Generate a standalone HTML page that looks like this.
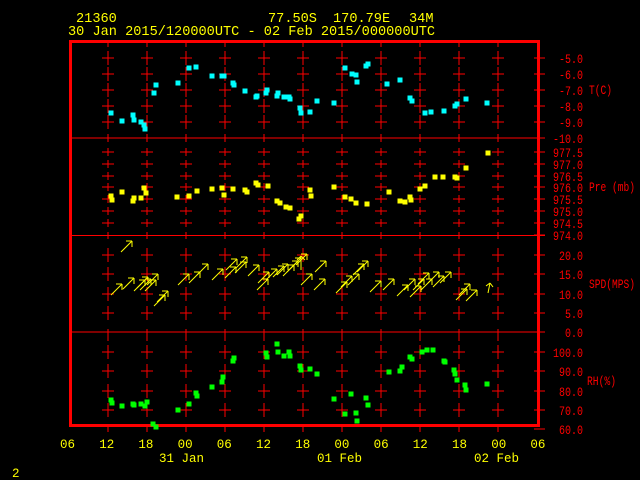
<!DOCTYPE html>
<html><head><meta charset="utf-8"><style>
html,body{margin:0;padding:0;background:#000;width:640px;height:480px;overflow:hidden}
svg{display:block}
text{font-family:"Liberation Mono","DejaVu Sans Mono",monospace;font-size:12.5px}
.h{font-size:13.6px}
.r{font-size:12.5px}
</style></head><body>
<svg id="s" width="640" height="480" xmlns="http://www.w3.org/2000/svg">
<g fill="#ffff00" class="h">
<text class="h" x="76" y="22">21360</text>
<text class="h" x="268" y="22">77.50S</text>
<text class="h" x="333" y="22">170.79E</text>
<text class="h" x="409" y="22">34M</text>
<text class="h" x="68" y="35">30 Jan 2015/120000UTC - 02 Feb 2015/000000UTC</text>
<text x="12" y="477">2</text>
<text x="159" y="462">31 Jan</text>
<text x="317" y="462">01 Feb</text>
<text x="474" y="462">02 Feb</text>
</g>
<g id="g"></g>
</svg>
<script>
var g=document.getElementById('g'),h='';
var R='#ff0000';
function L(x1,y1,x2,y2,c,w){h+='<line x1="'+x1+'" y1="'+y1+'" x2="'+x2+'" y2="'+y2+'" stroke="'+c+'" stroke-width="'+(w||1)+'"/>';}
function T(x,y,s,c,a,cl,tl){h+='<text'+(cl?' class="'+cl+'"':'')+(tl?' textLength="'+tl+'" lengthAdjust="spacingAndGlyphs"':'')+' x="'+x+'" y="'+y+'" fill="'+c+'"'+(a?' text-anchor="end"':'')+'>'+s+'</text>';}
var cols=[108,147,186,225,264,303,342,381,420,459,498];
var rows=[[58,74,90,106,122],[152,164,176,187,199,211,223],[255,274,294,313],[352,371,391,410]];
var vr=[[50,132],[144,229],[242,326],[344,422]];
for(var p=0;p<4;p++){cols.forEach(function(x){
 var r=rows[p];
 var vl=p==1?4:7;
 r.forEach(function(y){L(x-6,y,x+6,y,R);L(x,y-vl,x,y+vl,R);});
 L(x,vr[p][0]-10,x,vr[p][0]-3,R);L(x,vr[p][1]+3,x,vr[p][1]+10,R);
});}
L(70,138,545,138,R);L(70,235.5,545,235.5,R);L(70,332,545,332,R);
h+='<rect x="70.5" y="41.5" width="468" height="384" fill="none" stroke="'+R+'" stroke-width="3"/>';
var lab=[[58,'-5.0'],[74,'-6.0'],[90,'-7.0'],[106,'-8.0'],[122,'-9.0'],[138,'-10.0'],
[152,'977.5'],[164,'977.0'],[176,'976.5'],[187,'976.0'],[199,'975.5'],[211,'975.0'],[223,'974.5'],[235,'974.0'],
[255,'20.0'],[274,'15.0'],[294,'10.0'],[313,'5.0'],[332,'0.0'],
[352,'100.0'],[371,'90.0'],[391,'80.0'],[410,'70.0'],[429,'60.0']];
lab.forEach(function(a){L(534,a[0],545,a[0],R);T(583-a[1].length*6,a[0]+5,a[1],R,0,'r',a[1].length*6);});
T(589,94,'T(C)',R,0,'r',23);T(589,191,'Pre (mb)',R,0,'r',46);T(589,288,'SPD(MPS)',R,0,'r',46);T(587,385,'RH(%)',R,0,'r',29);
['06','12','18','00','06','12','18','00','06','12','18','00','06'].forEach(function(s,i){T(60+i*39.2,448,s,'#ffff00');});
function P(arr,c){for(var i=0;i<arr.length;i+=2)h+='<rect x="'+(arr[i]-2.5)+'" y="'+(arr[i+1]-2.5)+'" width="5" height="5" fill="'+c+'"/>';}
P([111,113,122,121,133,115,134,120,141,122,144,125,145,129,154,93,156,85,178,83,189,68,196,67,212,76,222,76,224,76,233,83,234,85,245,91,256,97,257,96,266,93,267,90,277,96,278,93,284,97,289,97,290,99,300,108,301,113,310,112,317,101,334,103,345,68,352,74,356,75,357,82,366,66,368,64,387,84,400,80,410,98,412,101,425,113,431,112,444,111,455,106,457,104,466,99,487,103],'#00ffff');
P([111,196,112,200,122,192,133,201,134,198,141,198,144,188,146,193,177,197,189,196,197,191,212,189,222,188,224,195,233,189,245,190,247,192,256,183,258,185,268,186,277,201,280,203,286,207,290,208,299,219,301,216,310,190,311,196,334,187,345,197,351,199,356,203,367,204,389,192,400,201,405,202,410,197,411,200,420,189,425,186,435,177,443,177,455,177,457,178,466,168,488,153],'#ffff00');
P([111,400,112,403,122,406,133,404,134,405,141,404,145,406,147,402,153,424,156,427,178,410,189,404,196,393,197,396,212,387,222,382,223,377,233,361,234,358,266,353,267,357,277,344,278,352,284,356,289,352,290,356,300,366,301,370,310,369,317,374,334,399,345,414,351,394,356,413,357,421,366,398,368,405,389,372,400,371,402,367,410,357,412,359,422,352,427,350,433,350,444,361,445,362,454,370,455,374,457,380,465,385,466,390,487,384],'#00ff00');
var W=[121,252,111,295,123,289,134,291,137,288,140,290,145,291,147,285,154,306,157,302,178,285,189,283,197,275,212,280,225,278,226,270,235,273,236,268,248,276,257,290,258,283,266,280,273,277,277,275,283,276,287,272,290,269,296,265,301,285,314,290,315,272,336,293,341,287,348,285,353,275,357,272,370,292,383,290,397,296,404,290,410,297,413,290,418,284,421,290,428,283,433,287,440,283,456,300,459,295,466,301];
var Y='#ffff00';
for(var i=0;i<W.length;i+=2){var x=W[i],y=W[i+1];L(x,y,x+11,y-11,Y);L(x+11,y-11,x+5,y-11,Y);L(x+11,y-11,x+11,y-5,Y);}
L(301,270,301,256,Y);L(301,256,297,260,Y);L(301,256,305,260,Y);
L(488,293,490,283,Y);L(490,283,486,286,Y);L(490,283,493,287,Y);
g.innerHTML=h;
</script>
</body></html>
